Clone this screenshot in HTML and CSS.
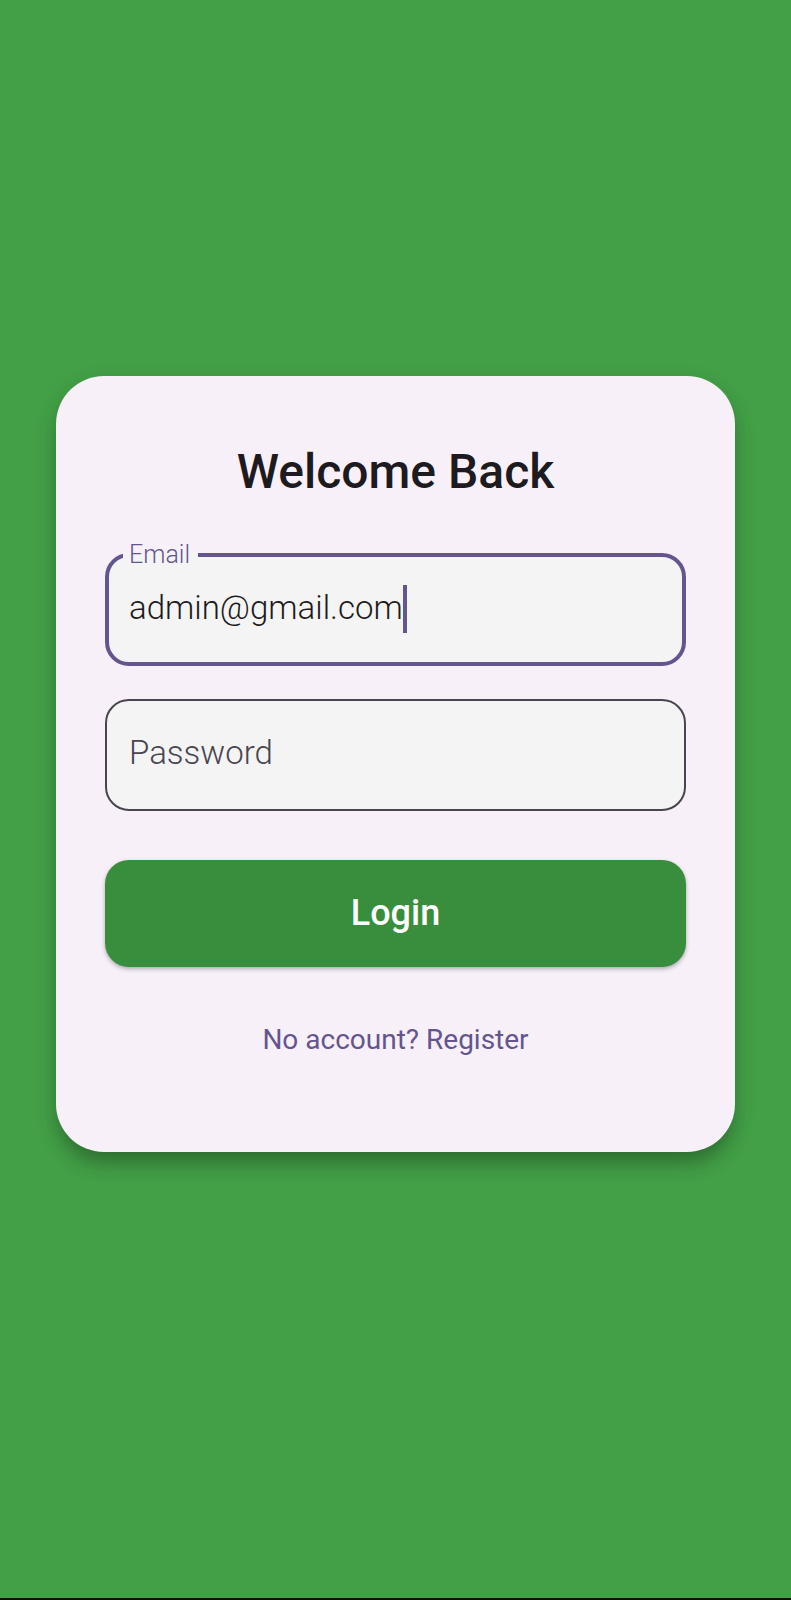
FILE: index.html
```html
<!DOCTYPE html>
<html lang="en">
<head>
<meta charset="utf-8">
<meta name="viewport" content="width=device-width, initial-scale=1">
<title>Login</title>
<link rel="stylesheet" href="styles.css">
</head>
<body class="page">
<main class="card">
  <h1 class="title">Welcome Back</h1>
  <form class="form">
    <fieldset class="field field-active">
      <legend class="legend"><label for="email">Email</label></legend>
      <div class="entry">
        <input class="input input-email" id="email" type="text" inputmode="email" value="admin@gmail.com" size="15" spellcheck="false">
        <span class="caret"></span>
      </div>
    </fieldset>
    <input class="input input-password" type="password" placeholder="Password" aria-label="Password">
    <button class="login" type="button">Login</button>
  </form>
  <a class="register" href="#">No account? Register</a>
</main>
</body>
</html>
```

FILE: styles.css
```css
* {
  box-sizing: border-box;
}

.page {
  margin: 0;
  min-height: 100vh;
  padding: 0 56px 71px;
  display: flex;
  align-items: center;
  justify-content: center;
  background: #43a047;
  border-bottom: 2px solid #0c120c;
  font-family: Roboto, "Liberation Sans", sans-serif;
}

.card {
  flex: 1;
  display: flex;
  flex-direction: column;
  align-items: center;
  padding: 64px 49px 88px;
  border-radius: 48px;
  background: #f7f0f9;
  box-shadow: 0 14px 20px -4px rgba(0, 0, 0, 0.26), 0 8px 24px rgba(0, 0, 0, 0.1);
}

.title {
  margin: 0 0 37px;
  font-size: 48px;
  line-height: 64px;
  font-weight: 500;
  color: #1d1b20;
}

.form {
  width: 100%;
  display: flex;
  flex-direction: column;
}

.field {
  min-width: 0;
  margin: 0 0 33px;
  padding: 0 20px 29px 14px;
  border: 4px solid #65558f;
  border-radius: 24px;
  background: #f4f4f4;
}

.legend {
  padding: 0 8px 0 6px;
  font-size: 25px;
  line-height: 28px;
  font-weight: 300;
  color: #65558f;
}

.entry {
  display: flex;
  align-items: center;
  margin-top: 16px;
  padding-left: 6px;
}

.input {
  min-width: 0;
  font-family: inherit;
  font-size: 33px;
  font-weight: 300;
  color: #1d1b20;
  outline: none;
}

.input-email {
  field-sizing: content;
  height: 48px;
  padding: 0 0 2px;
  border: 0;
  background: transparent;
  caret-color: transparent;
}

.caret {
  width: 4px;
  height: 48px;
  background: #65558f;
}

.input-password {
  width: 100%;
  height: 112px;
  margin-bottom: 49px;
  padding: 0 22px 4px;
  border: 2px solid #49454f;
  border-radius: 24px;
  background: #f4f4f4;
}

.input-password::placeholder {
  color: #49454f;
  opacity: 1;
}

.login {
  height: 107px;
  margin-bottom: 49px;
  border: 0;
  border-radius: 24px;
  background: #388e3c;
  box-shadow: 0 2px 4px rgba(0, 0, 0, 0.3);
  font-family: inherit;
  font-size: 36px;
  font-weight: 500;
  color: #fff;
}

.register {
  font-size: 28px;
  line-height: 48px;
  font-weight: 400;
  color: #65558f;
  text-decoration: none;
}
```
